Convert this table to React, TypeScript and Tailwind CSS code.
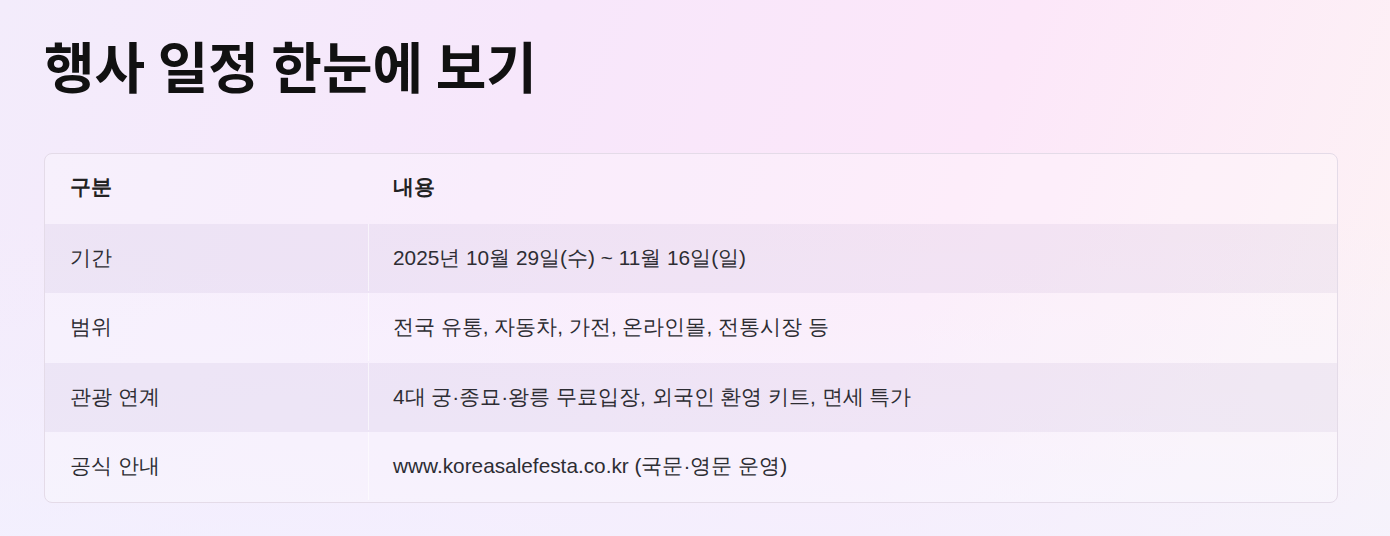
const rows = [
  { label: "기간", value: "2025년 10월 29일(수) ~ 11월 16일(일)" },
  { label: "범위", value: "전국 유통, 자동차, 가전, 온라인몰, 전통시장 등" },
  { label: "관광 연계", value: "4대 궁·종묘·왕릉 무료입장, 외국인 환영 키트, 면세 특가" },
  { label: "공식 안내", value: "www.koreasalefesta.co.kr (국문·영문 운영)" },
];

const font = { fontFamily: '"Liberation Sans", sans-serif' };
const titleFont = { fontFamily: '"Noto Sans CJK KR", sans-serif' };

export default function App() {
  return (
    <div
      style={font}
      className="min-h-screen w-full bg-[linear-gradient(180deg,rgba(255,255,255,0)_40%,rgba(242,242,255,0.7)_100%),linear-gradient(110deg,#f3ecfb_0%,#f7e7fb_35%,#fce7f9_65%,#fdf3f4_100%)] px-[44px] pt-[24px] pb-[34px]"
    >
      <h1
        style={titleFont}
        className="text-[55px] font-bold leading-[80px] text-[#111111]"
      >
        행사 일정 한눈에 보기
      </h1>

      <div className="mt-[49px] w-[1294px] overflow-hidden rounded-lg border border-[#e4dbe8] bg-white/25">
        <div className="grid grid-cols-[324px_1fr] h-[70px] items-center pb-[4px] text-[20.8px] font-bold text-[#222222]">
          <div className="pl-[25px]">구분</div>
          <div className="pl-[24px]">내용</div>
        </div>
        {rows.map((row, i) => (
          <div
            key={row.label}
            className={
              i % 2 === 0
                ? "grid grid-cols-[324px_1fr] h-[69px] pb-[2px] text-[20.8px] text-[#2d2d33] bg-[#5a3a80]/[0.06]"
                : "grid grid-cols-[324px_1fr] h-[70px] pb-[2px] text-[20.8px] text-[#2d2d33]"
            }
          >
            <div className="flex items-center border-r border-white/60 pl-[25px]">
              {row.label}
            </div>
            <div className="flex items-center pl-[24px] whitespace-nowrap">{row.value}</div>
          </div>
        ))}
      </div>
    </div>
  );
}
